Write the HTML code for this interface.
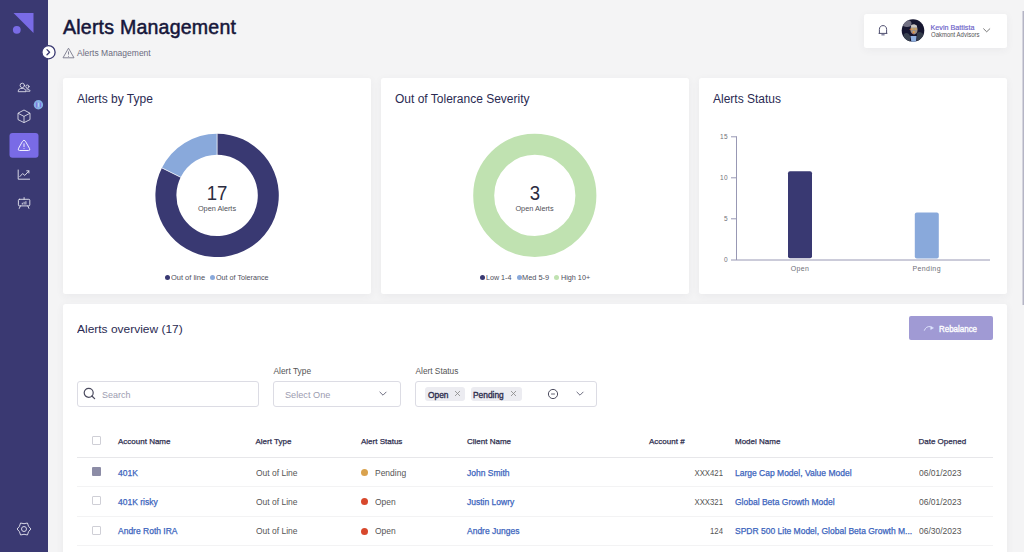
<!DOCTYPE html>
<html><head><meta charset="utf-8">
<style>
*{box-sizing:border-box;margin:0;padding:0}
html,body{width:1024px;height:552px;overflow:hidden;background:#f4f4f5;font-family:"Liberation Sans",sans-serif;color:#23234a}
.abs{position:absolute}
.t{position:absolute;white-space:nowrap;line-height:1}
#side{position:absolute;left:0;top:0;width:48px;height:552px;background:#3a3972}
.card{position:absolute;background:#fff;border-radius:2.5px;box-shadow:0 2px 9px rgba(50,50,80,0.055)}
.ctitle{position:absolute;left:14px;top:15.4px;font-size:12px;color:#2a2a52;white-space:nowrap;line-height:1}
.lg{position:absolute;font-size:7.5px;color:#4e4e5c;white-space:nowrap;line-height:1;transform-origin:0 0}
.dot{position:absolute;width:5px;height:5px;border-radius:50%}
.th{position:absolute;font-size:8px;-webkit-text-stroke:0.25px #2e2e4e;color:#2e2e4e;white-space:nowrap;line-height:1}
.td{position:absolute;font-size:9.2px;color:#555;white-space:nowrap;line-height:1;transform:scaleX(0.922);transform-origin:0 0}
.lnk{position:absolute;font-size:8.5px;color:#3b64bd;-webkit-text-stroke:0.25px #3b64bd;white-space:nowrap;line-height:1}
.cb{position:absolute;width:9px;height:9px;border:1px solid #cfcfd6;border-radius:1px;background:#fff}
.rline{position:absolute;left:77px;width:916px;height:1px;background:#f3f3f4}
.lbl{position:absolute;font-size:8px;color:#555;white-space:nowrap;line-height:1}
.box{position:absolute;height:25.5px;border:1px solid #dcdce4;border-radius:3px;background:#fff}
.ph{position:absolute;font-size:9.5px;color:#9c9cb0;white-space:nowrap;line-height:1}
.chip{position:absolute;height:14px;background:#ececf1;border-radius:3px}
.ax{position:absolute;font-size:6.5px;color:#707078;line-height:1;white-space:nowrap;letter-spacing:0.4px}
</style></head><body>

<div id="side">
  <svg class="abs" style="left:0;top:0" width="48" height="552" viewBox="0 0 48 552">
    <polygon points="13.5,13 33.5,13 33.5,33" fill="#796be6"/>
    <circle cx="16.8" cy="29.8" r="3.9" fill="#796be6"/>
    <!-- people -->
    <g fill="none" stroke="#e6e6f0" stroke-width="0.85" stroke-linecap="round">
      <circle cx="22.3" cy="85.4" r="2.2"/>
      <path d="M18.2,91.3 C18.2,89.2 19.8,88.4 22.1,88.4 C24.4,88.4 26,89.2 26,91.3 Z"/>
      <circle cx="27.4" cy="86.6" r="1.6"/>
      <path d="M26.8,89 C28.8,89 30,89.6 30,91.2 L26.6,91.2"/>
    </g>
    <!-- cube -->
    <g fill="none" stroke="#e6e6f0" stroke-width="0.85" stroke-linejoin="round">
      <path d="M24,110 L30,113.2 L30,119.6 L24,122.6 L18,119.6 L18,113.2 Z"/>
      <path d="M18,113.2 L24,116.4 L30,113.2 M24,116.4 L24,122.6"/>
    </g>
    <!-- badge -->
    <circle cx="38.4" cy="104.8" r="4.7" fill="#84b0e4"/>
    <path d="M36.6,102.4 L36.6,107.4 M40.6,102.6 L40.6,107" stroke="#8466e0" stroke-width="0.9"/>
    <path d="M38.5,102.8 L38.5,106.8" stroke="#c8d6f4" stroke-width="0.7"/>
    <!-- active -->
    <rect x="9.5" y="133" width="29" height="24.8" rx="3" fill="#796be6"/>
    <g fill="none" stroke="#f0f0ff" stroke-width="1" stroke-linejoin="round" stroke-linecap="round">
      <path d="M22.6,141.2 Q24,139 25.4,141.2 L29.6,148.6 Q30.6,150.5 28.4,150.5 L19.6,150.5 Q17.4,150.5 18.4,148.6 Z"/>
      <path d="M24,143.8 L24,146.6"/>
    </g>
    <circle cx="24" cy="148.4" r="0.5" fill="#f0f0ff"/>
    <!-- chart -->
    <g fill="none" stroke="#e6e6f0" stroke-width="0.9" stroke-linecap="round" stroke-linejoin="round">
      <path d="M18.2,170 L18.2,179.2 L29.6,179.2"/>
      <path d="M19.8,176.6 L22.6,173.6 L24.8,175.4 L28.8,171"/>
      <path d="M26.7,170.8 L28.9,170.8 L28.9,173"/>
    </g>
    <!-- presentation -->
    <g fill="none" stroke="#e6e6f0" stroke-width="0.9" stroke-linecap="round" stroke-linejoin="round">
      <rect x="18.4" y="199.3" width="11.4" height="6.6" rx="1"/>
      <path d="M24.1,197.6 L24.1,199.3 M20.4,205.9 L19.3,208.4 M27.8,205.9 L28.9,208.4"/>
      <path d="M22.3,204.2 L22.3,203.2 M24.1,204.2 L24.1,202.2 M25.9,204.2 L25.9,201.6"/>
    </g>
    <!-- gear -->
    <g fill="none" stroke="#e6e6f0" stroke-width="0.9" stroke-linejoin="round">
      <path d="M30.90,529.00 Q27.98,531.30 27.45,534.98 Q24.00,533.60 20.55,534.98 Q20.02,531.30 17.10,529.00 Q20.02,526.70 20.55,523.02 Q24.00,524.40 27.45,523.02 Q27.98,526.70 30.90,529.00 Z"/>
      <circle cx="24" cy="529" r="2.5"/>
    </g>
  </svg>
</div>

<!-- collapse button -->
<svg class="abs" style="left:40px;top:44px" width="16" height="16" viewBox="0 0 16 16">
  <circle cx="8.5" cy="8.2" r="6.6" fill="#fff" stroke="#3a3972" stroke-width="1.3"/>
  <path d="M7,5.6 L9.6,8.2 L7,10.8" fill="none" stroke="#3a3972" stroke-width="1.3" stroke-linecap="round" stroke-linejoin="round"/>
</svg>

<div class="t" style="left:63px;top:17.9px;font-size:19.3px;letter-spacing:0.2px;-webkit-text-stroke:0.5px #16163a;color:#16163a;transform:scaleX(1.015);transform-origin:0 0">Alerts Management</div>
<svg class="abs" style="left:62px;top:47px" width="14" height="12" viewBox="0 0 14 12">
  <path d="M6.5,1.2 L12,10.8 L1,10.8 Z" fill="none" stroke="#77778a" stroke-width="0.9" stroke-linejoin="round"/>
  <path d="M6.5,4.5 L6.5,7.6" stroke="#77778a" stroke-width="0.9"/>
  <circle cx="6.5" cy="9.2" r="0.5" fill="#77778a"/>
</svg>
<div class="t" style="left:77px;top:49px;font-size:8.5px;color:#6b6b80">Alerts Management</div>

<!-- user box -->
<div class="card" style="left:864px;top:14px;width:143px;height:33.7px"></div>
<svg class="abs" style="left:876px;top:23px" width="14" height="14" viewBox="0 0 14 14">
  <path d="M3.4,10.2 L3.4,6.4 C3.4,3.9 5,2.6 7,2.6 C9,2.6 10.6,3.9 10.6,6.4 L10.6,10.2 L11.2,10.4 L2.8,10.4 Z" fill="none" stroke="#464668" stroke-width="0.95" stroke-linejoin="round"/>
  <path d="M5.4,11.8 L8.6,11.8" stroke="#7a7a98" stroke-width="1.3"/>
</svg>
<svg class="abs" style="left:901px;top:19px" width="24" height="24" viewBox="0 0 24 24">
  <defs><clipPath id="av"><circle cx="12" cy="11.5" r="11.3"/></clipPath></defs>
  <g clip-path="url(#av)">
    <rect width="24" height="24" fill="#161630"/>
    <ellipse cx="6" cy="4.5" rx="4.5" ry="3.5" fill="#8a8898" opacity="0.8"/>
    <path d="M2,24 L3,15 C5,13 8,14 9,17 L9,24 Z" fill="#3a4250"/>
    <path d="M16,24 L16,14 C18,12 21,13 23,16 L24,24 Z" fill="#343c4a"/>
    <path d="M9.5,17 L10.5,24 L15,24 L15.5,17 Z" fill="#8fb0e0"/>
    <ellipse cx="13" cy="10.5" rx="3.6" ry="5" fill="#9c9088"/>
    <path d="M10,6.5 C11,5 15,5 16,7 L15.8,8.5 L10.2,8.5 Z" fill="#c9c6c4"/>
    <path d="M10.2,10 L12.5,10 M13.5,10 L15.8,10" stroke="#f0a838" stroke-width="1.1"/>
    <circle cx="12.8" cy="13" r="1" fill="#e8a040"/>
    <circle cx="9.3" cy="10.5" r="0.7" fill="#e05a30"/>
    <circle cx="12" cy="14.2" r="0.6" fill="#d05030"/>
  </g>
</svg>
<div class="t" id="kb" style="left:930.5px;top:23.6px;font-size:7.2px;-webkit-text-stroke:0.15px #6a60c8;color:#6a60c8">Kevin Battista</div>
<div class="t" id="oa" style="left:930.5px;top:32.3px;font-size:6.8px;color:#555;transform:scaleX(0.88);transform-origin:0 0">Oakmont Advisors</div>
<svg class="abs" style="left:982px;top:26px" width="10" height="8" viewBox="0 0 10 8">
  <path d="M1.6,2.8 L4.7,5.8 L7.8,2.8" fill="none" stroke="#555" stroke-width="0.8" stroke-linecap="round"/>
</svg>

<!-- card 1 -->
<div class="card" style="left:63px;top:78px;width:308px;height:215.8px">
  <div class="ctitle">Alerts by Type</div>
</div>
<!-- card 2 -->
<div class="card" style="left:381px;top:78px;width:308px;height:215.8px">
  <div class="ctitle">Out of Tolerance Severity</div>
</div>
<!-- card 3 -->
<div class="card" style="left:699px;top:78px;width:308px;height:215.8px">
  <div class="ctitle">Alerts Status</div>
</div>
<svg class="abs" style="left:0;top:0" width="1024" height="300">
  <!-- donut 1 -->
  <path d="M217.1,133.7 A61.7,61.7 0 1 1 161.87,167.90 L180.67,177.26 A40.7,40.7 0 1 0 217.1,154.7 Z" fill="#393972"/>
  <path d="M161.87,167.90 A61.7,61.7 0 0 1 217.1,133.7 L217.1,154.7 A40.7,40.7 0 0 0 180.67,177.26 Z" fill="#89a9db"/>
  <line x1="217.1" y1="133.2" x2="217.1" y2="155.2" stroke="#fff" stroke-width="0.7"/>
  <line x1="161.42" y1="167.68" x2="181.11" y2="177.48" stroke="#fff" stroke-width="0.7"/>
  <!-- donut 2 -->
  <circle cx="534.8" cy="195.4" r="51.1" fill="none" stroke="#c0e2b1" stroke-width="21"/>
</svg>
<div class="t" style="left:187px;top:182.8px;width:60px;text-align:center;font-size:20px;color:#2c2c40;transform:scaleX(0.93)">17</div>
<div class="t" style="left:187px;top:204.5px;width:60px;text-align:center;font-size:7.3px;color:#505058">Open Alerts</div>
<div class="t" style="left:504.5px;top:182.8px;width:60px;text-align:center;font-size:20px;color:#2c2c40;transform:scaleX(0.93)">3</div>
<div class="t" style="left:504.5px;top:204.5px;width:60px;text-align:center;font-size:7.3px;color:#505058">Open Alerts</div>

<div class="dot" style="left:164.8px;top:275.1px;background:#393972"></div>
<div class="lg" style="left:170.8px;top:273.8px;font-size:7.8px;transform:scaleX(0.958)">Out of line</div>
<div class="dot" style="left:210px;top:275.1px;background:#89a9db"></div>
<div class="lg" style="left:216px;top:273.8px;font-size:7.8px;transform:scaleX(0.92)">Out of Tolerance</div>

<div class="dot" style="left:479.5px;top:275.1px;background:#393972"></div>
<div class="lg" style="left:485.8px;top:273.8px;font-size:7.8px;transform:scaleX(0.914)">Low 1-4</div>
<div class="dot" style="left:516.8px;top:275.1px;background:#89a9db"></div>
<div class="lg" style="left:522.2px;top:273.8px;font-size:7.8px;transform:scaleX(0.948)">Med 5-9</div>
<div class="dot" style="left:554.4px;top:275.1px;background:#c0e2b1"></div>
<div class="lg" style="left:560.5px;top:273.8px;font-size:7.8px;transform:scaleX(0.927)">High 10+</div>

<svg class="abs" style="left:0;top:0" width="1024" height="300">
  <g stroke="#9898b4" stroke-width="1">
    <line x1="736.5" y1="136.3" x2="736.5" y2="260"/>
    <line x1="731" y1="260" x2="990" y2="260"/>
    <line x1="731" y1="136.8" x2="736.5" y2="136.8"/>
    <line x1="731" y1="177.8" x2="736.5" y2="177.8"/>
    <line x1="731" y1="218.8" x2="736.5" y2="218.8"/>
  </g>
  <rect x="788" y="171.3" width="24" height="87" rx="2" fill="#393972"/>
  <rect x="914.8" y="212.6" width="24" height="45.8" rx="2" fill="#89a9db"/>
</svg>
<div class="ax" style="left:700px;top:134px;width:28px;text-align:right">15</div>
<div class="ax" style="left:700px;top:175px;width:28px;text-align:right">10</div>
<div class="ax" style="left:700px;top:215.5px;width:28px;text-align:right">5</div>
<div class="ax" style="left:700px;top:256.5px;width:28px;text-align:right">0</div>
<div class="ax" style="left:770px;top:265px;width:60px;text-align:center;font-size:7px">Open</div>
<div class="ax" style="left:896.7px;top:265px;width:60px;text-align:center;font-size:7px">Pending</div>

<!-- bottom card -->
<div class="card" style="left:63px;top:304px;width:944px;height:300px">
  <div class="ctitle" style="top:19.6px;font-size:11.4px;transform:scaleX(1.05);transform-origin:0 0">Alerts overview (17)</div>
</div>

<!-- rebalance -->
<div class="abs" style="left:909px;top:316px;width:84px;height:24px;background:#a09ad4;border-radius:2px"></div>
<svg class="abs" style="left:918px;top:320px" width="20" height="16" viewBox="0 0 20 16">
  <path d="M6.4,10.3 C7.4,7.6 9.6,6.1 12.2,6.6" fill="none" stroke="#e4eaff" stroke-width="0.9" stroke-linecap="round"/>
  <path d="M12.7,6.3 L12.7,9.6 L15.5,7.9 Z" fill="#dfe6ff" stroke="#dfe6ff" stroke-width="0.5" stroke-linejoin="round"/>
</svg>
<div class="t" style="left:939px;top:325.4px;font-size:8.4px;-webkit-text-stroke:0.35px #fff;color:#fff;transform:scaleX(0.95);transform-origin:0 0">Rebalance</div>

<!-- filters -->
<div class="box" style="left:77px;top:381px;width:182px"></div>
<svg class="abs" style="left:82px;top:387px" width="14" height="13" viewBox="0 0 14 13">
  <circle cx="6.7" cy="5.8" r="4.5" fill="none" stroke="#4a4a5e" stroke-width="1.2"/>
  <path d="M9.9,9 L12.6,11.6" stroke="#4a4a5e" stroke-width="1.3" stroke-linecap="round"/>
</svg>
<div class="ph" style="left:101.7px;top:389.6px;font-size:9.6px;transform:scaleX(0.935);transform-origin:0 0">Search</div>

<div class="lbl" style="left:273.5px;top:367px;font-size:8.4px">Alert Type</div>
<div class="box" style="left:273px;top:381px;width:128px"></div>
<div class="ph" style="left:284.7px;top:389.6px;font-size:9.6px;transform:scaleX(0.955);transform-origin:0 0">Select One</div>
<svg class="abs" style="left:378px;top:390px" width="10" height="8" viewBox="0 0 10 8">
  <path d="M1.9,2.1 L5,5.2 L8.1,2.1" fill="none" stroke="#5c5c72" stroke-width="0.9" stroke-linecap="round" stroke-linejoin="round"/>
</svg>

<div class="lbl" style="left:415.5px;top:367.4px;font-size:8.3px">Alert Status</div>
<div class="box" style="left:415px;top:381px;width:182px"></div>
<div class="chip" style="left:425px;top:387px;width:40px"></div>
<div class="t" style="left:428px;top:390.5px;font-size:8.4px;-webkit-text-stroke:0.35px #2e2e4e;color:#2e2e4e">Open</div>
<svg class="abs" style="left:454px;top:389.5px" width="7" height="7" viewBox="0 0 7 7"><path d="M1,1 L6,6 M6,1 L1,6" stroke="#888" stroke-width="0.8"/></svg>
<div class="chip" style="left:470.5px;top:387px;width:51px"></div>
<div class="t" style="left:473px;top:390.5px;font-size:8.4px;-webkit-text-stroke:0.35px #2e2e4e;color:#2e2e4e">Pending</div>
<svg class="abs" style="left:509.5px;top:389.5px" width="7" height="7" viewBox="0 0 7 7"><path d="M1,1 L6,6 M6,1 L1,6" stroke="#888" stroke-width="0.8"/></svg>
<svg class="abs" style="left:546px;top:387px" width="14" height="14" viewBox="0 0 14 14">
  <circle cx="7" cy="7" r="4.6" fill="none" stroke="#3a3a4e" stroke-width="0.9"/>
  <path d="M5.1,7 L8.9,7" stroke="#3a3a4e" stroke-width="0.8"/>
</svg>
<svg class="abs" style="left:574.5px;top:390px" width="10" height="8" viewBox="0 0 10 8">
  <path d="M1.9,2.1 L5,5.2 L8.1,2.1" fill="none" stroke="#5c5c72" stroke-width="0.9" stroke-linecap="round" stroke-linejoin="round"/>
</svg>

<!-- table -->
<div class="cb" style="left:92px;top:436px"></div>
<div class="th" style="left:118px;top:437.5px">Account Name</div>
<div class="th" style="left:255.5px;top:437.5px">Alert Type</div>
<div class="th" style="left:361px;top:437.5px">Alert Status</div>
<div class="th" style="left:467px;top:437.5px">Client Name</div>
<div class="th" style="left:649px;top:437.5px">Account #</div>
<div class="th" style="left:735px;top:437.5px">Model Name</div>
<div class="th" style="left:918.5px;top:437.5px">Date Opened</div>
<div class="rline" style="top:457px;background:#e7e7ea"></div>

<div class="abs" style="left:92px;top:467px;width:9px;height:9px;background:#8c8ca6;border-radius:1px"></div>
<div class="lnk" style="left:118px;top:468.9px">401K</div>
<div class="td" style="left:255.5px;top:468.6px">Out of Line</div>
<div class="abs" style="left:361px;top:469px;width:7px;height:7px;border-radius:50%;background:#d9a24e"></div>
<div class="td" style="left:375px;top:468.6px">Pending</div>
<div class="lnk" style="left:467px;top:468.9px">John Smith</div>
<div class="td" style="left:600px;top:468.6px;width:123px;text-align:right;font-size:9.2px;transform:scaleX(0.845);transform-origin:100% 0">XXX421</div>
<div class="lnk" style="left:735px;top:468.9px">Large Cap Model, Value Model</div>
<div class="td" style="left:918.5px;top:468.6px">06/01/2023</div>
<div class="rline" style="top:486px"></div>

<div class="cb" style="left:92px;top:496px"></div>
<div class="lnk" style="left:118px;top:497.9px">401K risky</div>
<div class="td" style="left:255.5px;top:497.6px">Out of Line</div>
<div class="abs" style="left:361px;top:498px;width:7px;height:7px;border-radius:50%;background:#d8482c"></div>
<div class="td" style="left:375px;top:497.6px">Open</div>
<div class="lnk" style="left:467px;top:497.9px">Justin Lowry</div>
<div class="td" style="left:600px;top:497.6px;width:123px;text-align:right;font-size:9.2px;transform:scaleX(0.845);transform-origin:100% 0">XXX321</div>
<div class="lnk" style="left:735px;top:497.9px">Global Beta Growth Model</div>
<div class="td" style="left:918.5px;top:497.6px">06/01/2023</div>
<div class="rline" style="top:515.5px"></div>

<div class="cb" style="left:92px;top:525.5px"></div>
<div class="lnk" style="left:118px;top:527.4px">Andre Roth IRA</div>
<div class="td" style="left:255.5px;top:527.1px">Out of Line</div>
<div class="abs" style="left:361px;top:527.5px;width:7px;height:7px;border-radius:50%;background:#d8482c"></div>
<div class="td" style="left:375px;top:527.1px">Open</div>
<div class="lnk" style="left:467px;top:527.4px">Andre Junges</div>
<div class="td" style="left:600px;top:527.1px;width:123px;text-align:right;font-size:9.2px;transform:scaleX(0.845);transform-origin:100% 0">124</div>
<div class="lnk" style="left:735px;top:527.4px">SPDR 500 Lite Model, Global Beta Growth M...</div>
<div class="td" style="left:918.5px;top:527.1px">06/30/2023</div>
<div class="rline" style="top:544.6px"></div>

<!-- scrollbar -->
<div class="abs" style="left:1021.5px;top:10.5px;width:2.5px;height:294px;background:linear-gradient(90deg,#e4e4ea,#a4a4b8)"></div>

</body></html>
